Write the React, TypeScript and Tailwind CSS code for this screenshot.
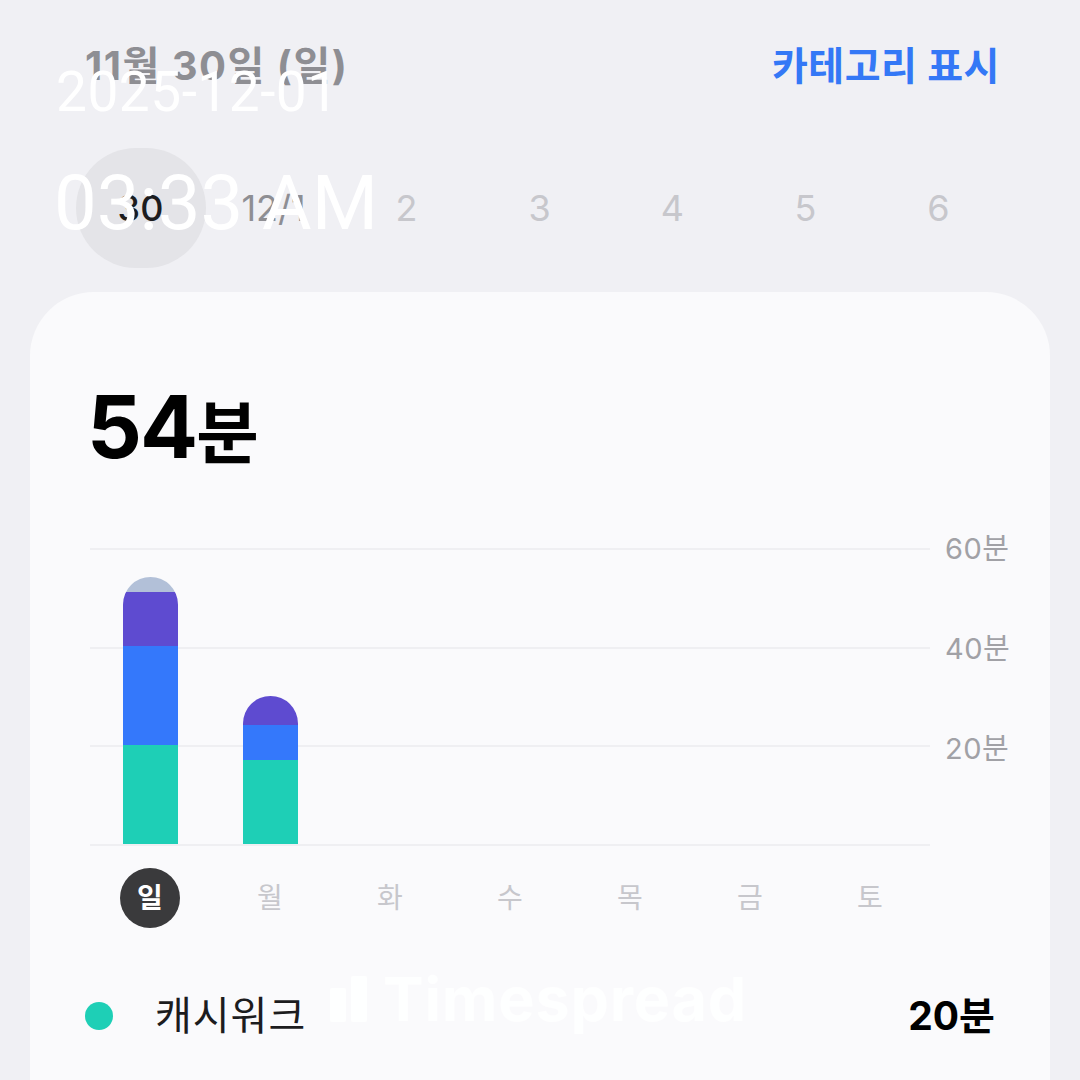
import React from 'react';

const FONT = { fontFamily: 'Inter, "Noto Sans CJK KR", sans-serif' };

const dates = ['30', '12/1', '2', '3', '4', '5', '6'];
const days = ['일', '월', '화', '수', '목', '금', '토'];

// minutes per segment, bottom to top
const bars: { color: string; min: number }[][] = [
	[
		{ color: '#1ecfb6', min: 20 },
		{ color: '#3478fb', min: 20 },
		{ color: '#5e4bd0', min: 11 },
		{ color: '#b2c0d8', min: 3 },
	],
	[
		{ color: '#1ecfb6', min: 17 },
		{ color: '#3478fb', min: 7 },
		{ color: '#5e4bd0', min: 6 },
	],
	[], [], [], [], [],
];

const PX_PER_MIN = 4.95;

export default function App() {
	return (
		<div className="relative w-[1080px] h-[1080px] overflow-hidden bg-[#f0f0f4]" style={FONT}>
			<div className="flex items-center justify-between pl-[85px] pr-[80px] pt-[42px]">
				<span className="text-[40px] font-bold text-[#8e8e93] leading-[48px] tracking-[1.5px]">11월 30일 (일)</span>
				<span className="text-[39px] font-bold text-[#3478f6] leading-[48px] tracking-[0.5px]">카테고리 표시</span>
			</div>

			<div className="flex pl-[74px] mt-[58px]">
				{dates.map((d, i) => (
					<div key={d} className="w-[133px] h-[120px] flex items-center justify-center">
						{i === 0 ? (
							<div className="w-[130px] h-[120px] rounded-full bg-[#e4e4e8] flex items-center justify-center text-[36px] font-medium text-[#1c1c1e]">
								{d}
							</div>
						) : (
							<span className={i === 1 ? 'text-[36px] text-[#8e8e93]' : 'text-[36px] text-[#c7c7cc]'}>{d}</span>
						)}
					</div>
				))}
			</div>

			<div className="ml-[30px] mr-[30px] mt-[24px] h-[900px] rounded-t-[64px] bg-[#fafafc]">
				<div className="pl-[57px] pt-[92px] flex items-baseline font-bold text-black leading-none">
					<span className="text-[86px] tracking-[-2px]">54</span>
					<span className="text-[68px]">분</span>
				</div>

				<div className="flex ml-[60px] mt-[78px]">
					<div className="relative w-[840px] h-[298px]">
						<div className="absolute inset-0 flex flex-col justify-between">
							<div className="h-[2px] bg-[#efeff2]" />
							<div className="h-[2px] bg-[#efeff2]" />
							<div className="h-[2px] bg-[#efeff2]" />
							<div className="h-[2px] bg-[#efeff2]" />
						</div>
						<div className="absolute inset-x-0 bottom-[2px] top-0 flex items-end">
							{bars.map((segs, i) => (
								<div key={i} className="w-[120px] flex justify-center">
									{segs.length > 0 && (
										<div className="w-[55px] flex flex-col-reverse overflow-hidden rounded-t-full">
											{segs.map((s, j) => (
												<div key={j} style={{ height: s.min * PX_PER_MIN, background: s.color }} />
											))}
										</div>
									)}
								</div>
							))}
						</div>
					</div>
					<div className="flex flex-col justify-between ml-[15px] -mt-[17px] h-[236px] text-[29px] text-[#a1a1a6] leading-[36px] tracking-[0.5px]">
						<span>60분</span>
						<span>40분</span>
						<span>20분</span>
					</div>
				</div>

				<div className="flex ml-[60px] mt-[22px]">
					{days.map((d, i) => (
						<div key={d} className="w-[120px] flex justify-center">
							{i === 0 ? (
								<div className="w-[60px] h-[60px] rounded-full bg-[#3a3a3c] flex items-center justify-center text-[28px] font-bold text-white">
									{d}
								</div>
							) : (
								<div className="h-[60px] flex items-center text-[28px] text-[#c7c7cc]">{d}</div>
							)}
						</div>
					))}
				</div>

				<div className="flex items-center pl-[55px] pr-[55px] mt-[58px] h-[60px]">
					<div className="w-[28px] h-[28px] rounded-full bg-[#1ecfb6]" />
					<span className="ml-[42px] text-[40px] text-[#1c1c1e] tracking-[1px]">캐시워크</span>
					<span className="ml-auto text-[39px] font-bold text-black">20분</span>
				</div>
			</div>

			{/* watermark overlays */}
			<div className="absolute left-[56px] top-[61px] text-white text-[55px] leading-[62px] tracking-[0.5px]" style={{ fontFamily: 'Roboto, sans-serif' }}>
				2025-12-01
			</div>
			<div className="absolute left-[54px] top-[160px] text-white text-[76px] leading-[86px]" style={{ fontFamily: 'Roboto, sans-serif' }}>
				03:33 AM
			</div>
			<div className="absolute left-[330px] top-[968px] flex items-center gap-[16px] text-white/90">
				<div className="flex gap-[5px] items-end h-[46px]">
					<div className="w-[16px] h-[34px] bg-white/90 rounded-[2px]" />
					<div className="w-[16px] h-[46px] bg-white/90 rounded-[2px]" />
				</div>
				<span className="text-[61px] font-bold leading-[62px] tracking-[0.8px]" style={{ fontFamily: 'Inter, sans-serif' }}>Timespread</span>
			</div>
		</div>
	);
}
